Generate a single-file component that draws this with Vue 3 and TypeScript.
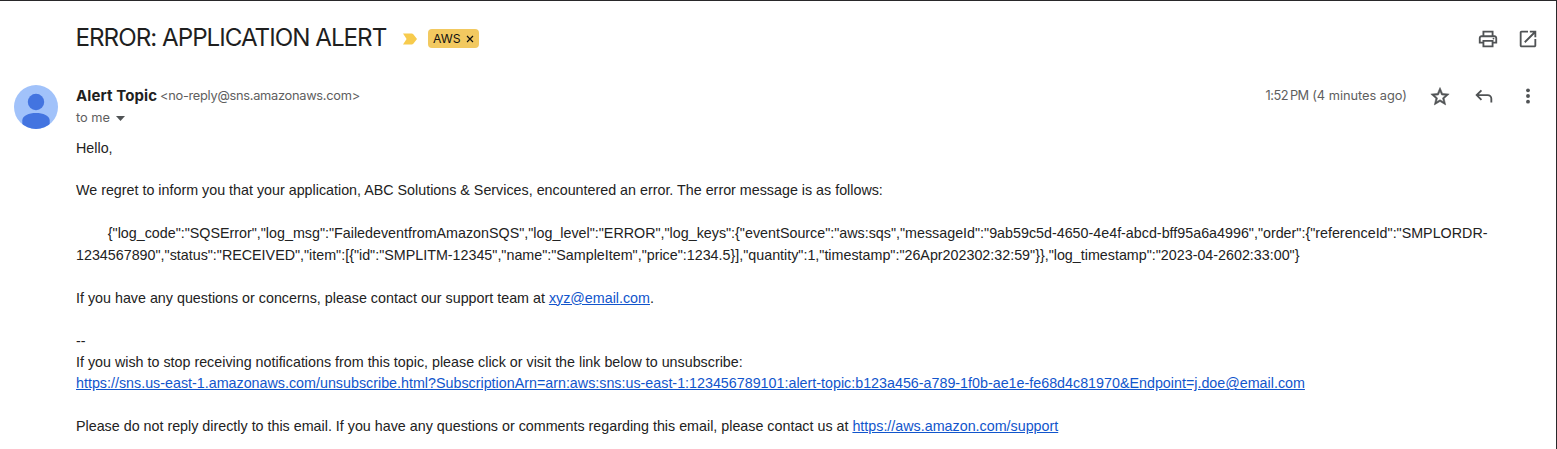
<script setup lang="ts">
const subject = 'ERROR: APPLICATION ALERT'
const payload =
  '{"log_code":"SQSError","log_msg":"FailedeventfromAmazonSQS","log_level":"ERROR","log_keys":{"eventSource":"aws:sqs","messageId":"9ab59c5d-4650-4e4f-abcd-bff95a6a4996","order":{"referenceId":"SMPLORDR-1234567890","status":"RECEIVED","item":[{"id":"SMPLITM-12345","name":"SampleItem","price":1234.5}],"quantity":1,"timestamp":"26Apr202302:32:59"}},"log_timestamp":"2023-04-2602:33:00"}'
const splitAt = payload.indexOf('1234567890"')
const payloadLines: string[] = [
  '\u00a0'.repeat(8) + payload.slice(0, splitAt),
  payload.slice(splitAt),
]
const unsubscribeUrl =
  'https://sns.us-east-1.amazonaws.com/unsubscribe.html?SubscriptionArn=arn:aws:sns:us-east-1:123456789101:alert-topic:b123a456-a789-1f0b-ae1e-fe68d4c81970&Endpoint=j.doe@email.com'
</script>

<template>
  <main class="mail">
    <header class="subject-row">
      <h1 class="subject">{{ subject }}</h1>
      <svg class="marker" viewBox="0 0 16 12"><path d="M1 .5h8.7q1 0 1.6.8L15 6l-3.7 4.7q-.6.8-1.6.8H1L4.6 6z" fill="#f7cb4d" /></svg>
      <span class="label"><span class="label-name">AWS</span>
        <svg class="label-x" viewBox="0 0 8 8"><path d="M1 1l6 6M7 1L1 7" stroke="#111" stroke-width="1.15" fill="none" /></svg>
      </span>
      <div class="subject-actions">
        <svg class="icon" viewBox="0 0 24 24"><path d="M19 8h-1V3H6v5H5c-1.66 0-3 1.34-3 3v6h4v4h12v-4h4v-6c0-1.66-1.34-3-3-3zM8 5h8v3H8V5zm8 12v2H8v-4h8v2zm2-2v-2H6v2H4v-4c0-.55.45-1 1-1h14c.55 0 1 .45 1 1v4h-2z" /><circle cx="18" cy="11.5" r="1" /></svg>
        <svg class="icon" viewBox="0 0 24 24"><path d="M19 19H5V5h7V3H5c-1.11 0-2 .9-2 2v14c0 1.1.89 2 2 2h14c1.1 0 2-.9 2-2v-7h-2v7zM14 3v2h3.59l-9.83 9.83 1.41 1.41L19 6.41V10h2V3h-7z" /></svg>
      </div>
    </header>

    <section class="message">
      <svg class="avatar" viewBox="0 0 44 44">
        <defs><clipPath id="avatar-clip"><circle cx="22" cy="22" r="22" /></clipPath></defs>
        <g clip-path="url(#avatar-clip)">
          <rect width="44" height="44" fill="#a1c2fa" />
          <circle cx="22" cy="17" r="8.2" fill="#4374e0" />
          <path d="M8.3 46V35.5C8.3 30.5 15 28 22 28s13.7 2.5 13.7 7.5V46z" fill="#4374e0" />
        </g>
      </svg>

      <div class="content">
        <div class="sender-row">
          <span class="sender">Alert Topic</span>
          <span class="address">&lt;no-reply@sns.amazonaws.com&gt;</span>
          <span class="time"><span class="clock">1:52&#8239;PM</span> (4 minutes ago)</span>
          <div class="message-actions">
            <svg class="icon star" viewBox="0 0 24 24"><path d="M22 9.24l-7.19-.62L12 2 9.19 8.63 2 9.24l5.46 4.73L5.82 21 12 17.27 18.18 21l-1.63-7.03L22 9.24zM12 15.4l-3.76 2.27 1-4.28-3.32-2.88 4.38-.38L12 6.1l1.71 4.04 4.38.38-3.32 2.88 1 4.28L12 15.4z" transform="translate(0 .7)" /></svg>
            <svg class="icon" viewBox="0 0 24 24"><path d="M20 19V15a4 4 0 0 0-4-4H4.5M9.2 5.8L4 11l5.2 5.2" fill="none" stroke="#505355" stroke-width="2" /></svg>
            <svg class="icon" viewBox="0 0 24 24"><circle cx="12" cy="5.8" r="2.1" /><circle cx="12" cy="12" r="2.1" /><circle cx="12" cy="18.2" r="2.1" /></svg>
          </div>
        </div>
        <div class="recipient">
          <span class="to">to me</span>
          <svg class="caret" viewBox="0 0 9 5"><path d="M0 0h9L4.5 5z" fill="#505355" /></svg>
        </div>

        <div class="body">
          <p>Hello,</p>
          <p>We regret to inform you that your application, ABC Solutions &amp; Services, encountered an error. The error message is as follows:</p>
          <p><template v-for="(line, i) in payloadLines" :key="i">{{ line }}<br v-if="i === 0" /></template></p>
          <p>If you have any questions or concerns, please contact our support team at <a>xyz@email.com</a>.</p>
          <p>--<br />If you wish to stop receiving notifications from this topic, please click or visit the link below to unsubscribe:<br /><a>{{ unsubscribeUrl }}</a></p>
          <p>Please do not reply directly to this email. If you have any questions or comments regarding this email, please contact us at <a>https://aws.amazon.com/support</a></p>
        </div>
      </div>
    </section>
  </main>
</template>

<style>
body {
  margin: 0;
  overflow: hidden;
}
</style>

<style scoped>
.mail {
  box-sizing: border-box;
  width: 1557px;
  height: 449px;
  overflow: hidden;
  border-top: 1px solid #29282a;
  border-right: 1px solid #29282a;
  background: #fff;
  color: #1f1f1f;
  font-family: Inter, "Liberation Sans", sans-serif;
}
.subject-row {
  display: flex;
  align-items: center;
  height: 76px;
  padding: 0 17px 0 76px;
}
.subject {
  width: 310px;
  margin: 0;
  padding-bottom: 2px;
  font-size: 24.2px;
  font-weight: 370;
  line-height: 30px;
  letter-spacing: -1px;
  text-indent: -0.5px;
  white-space: nowrap;
}
.marker {
  width: 16px;
  height: 12px;
  margin-left: 16px;
}
.label {
  display: flex;
  align-items: center;
  box-sizing: border-box;
  width: 51px;
  height: 19px;
  margin: 0 0 1px 10px;
  padding: 0 5px;
  border-radius: 4px;
  background: #f2c960;
  color: #111;
  font-size: 12.2px;
}
.label-name {
  width: 28px;
}
.label-x {
  width: 8px;
  height: 8px;
  margin: 1px 0 0 5px;
}
.icon {
  display: block;
  width: 22px;
  height: 22px;
  fill: #505355;
}
.star {
  stroke: #505355;
  stroke-width: 0.6px;
}
.subject-actions {
  display: flex;
  gap: 18px;
  margin-left: auto;
}
.message {
  display: flex;
  align-items: flex-start;
  padding: 8px 17px 0 14px;
}
.avatar {
  flex: none;
  width: 44px;
  height: 44px;
  margin-right: 18px;
}
.content {
  flex: 1;
  min-width: 0;
}
.sender-row {
  display: flex;
  align-items: center;
  height: 22px;
  white-space: nowrap;
}
.sender {
  width: 84px;
  padding-bottom: 1px;
  font-size: 15px;
  font-weight: 700;
  letter-spacing: 0.1px;
}
.address,
.time,
.to {
  padding-bottom: 1px;
  color: #5e5e5e;
  font-size: 12.8px;
}
.address {
  letter-spacing: -0.27px;
}
.time {
  margin-left: auto;
  letter-spacing: -0.02px;
}
.clock {
  letter-spacing: -0.5px;
}
.message-actions {
  display: flex;
  gap: 22px;
  margin-left: 22px;
}
.recipient {
  display: flex;
  align-items: center;
  height: 22px;
}
.caret {
  width: 9px;
  height: 5px;
  margin-left: 6px;
}
.body {
  padding-top: 8.53px;
  color: #222;
  font-family: "Liberation Sans", Arial, sans-serif;
  font-size: 14.3px;
  line-height: 21.45px;
  white-space: nowrap;
}
.body p {
  margin: 0 0 21.45px;
}
.body a {
  color: #1155cc;
  text-decoration: underline;
}
</style>
